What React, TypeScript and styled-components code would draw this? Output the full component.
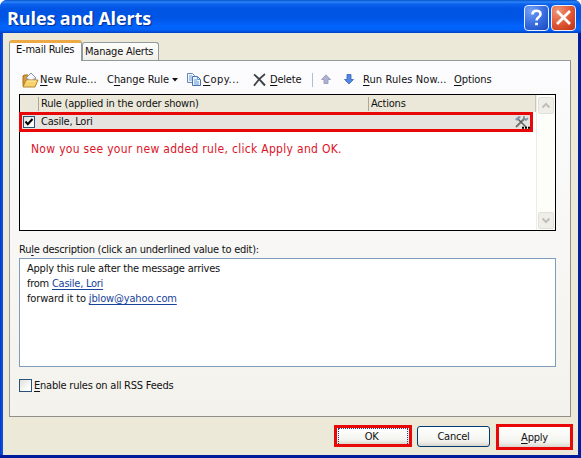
import React from 'react';
import styled, { createGlobalStyle } from 'styled-components';

const Global = createGlobalStyle`
  html, body { margin: 0; padding: 0; background: #fff; overflow: hidden; }
  * { box-sizing: border-box; }
  body { font-family: "DejaVu Sans Condensed", "DejaVu Sans", sans-serif; font-size: 11px; font-stretch: condensed; color: #111; }
`;
const Window = styled.div`
  width: 581px; height: 458px; display: flex; flex-direction: column;
  border-radius: 7px 7px 0 0; overflow: hidden;
  background: linear-gradient(90deg, #0038c8 0, #1155e4 3px, #0a3fd0 570px, #001c9c 580px);
  border-bottom: 3px solid #001c9c;
`;
const TitleBar = styled.header`
  height: 33px; flex: none; display: flex; align-items: center; padding: 2px 5px 0 7px;
  background: linear-gradient(#0751cc 0, #2a86f6 2px, #0c62ee 4px, #0054e3 9px, #0055e5 18px, #0264fd 26px, #0261f8 30px, #003fc4 33px);
`;
const Title = styled.h1`
  flex: 1; margin: 0; font: bold 18px/28px "Open Sans", "Noto Sans", sans-serif; font-stretch: normal;
  color: #fff; letter-spacing: -0.1px; text-shadow: 1px 1px 1px #0a2a90;
`;
const CaptionButton = styled.button<{ $close?: boolean }>`
  width: 25px; height: 26px; padding: 0; margin-left: 2px; border: 1px solid #e8efff; border-radius: 4px;
  background: ${p => p.$close
    ? 'radial-gradient(circle at 25% 20%, #ef9779, #e15a37 50%, #bd3010)'
    : 'radial-gradient(circle at 25% 20%, #729ff5, #3a6fe0 50%, #1648bd)'};
  svg { display: block; margin: auto; }
`;
const Body = styled.main`
  flex: 1; margin: 0 3px 0 3px; padding: 7px 5px 0 6px; background: #ece9d8;
`;
const Tabs = styled.div`display: flex; align-items: flex-end; height: 20px;`;
const Tab = styled.div<{ $active?: boolean }>`
  position: relative; z-index: ${p => p.$active ? 1 : 0};
  width: ${p => p.$active ? 73 : 77}px; height: ${p => p.$active ? 21 : 18}px;
  margin-bottom: ${p => p.$active ? -1 : 0}px;
  padding-left: ${p => p.$active ? 6 : 2}px;
  line-height: ${p => p.$active ? 14 : 18}px;
  border: 1px solid #919b9c; border-bottom: 0; border-radius: 3px 3px 0 0;
  border-top: ${p => p.$active ? '3px solid #eda945' : '1px solid #919b9c'};
  background: ${p => p.$active ? '#fcfcfe' : 'linear-gradient(#fdfdfb, #f1f0e8)'};
`;
const Panel = styled.section`
  width: 562px; height: 357px; border: 1px solid #919b9c; border-right-color: #8e8f8a; border-bottom-color: #8e8f8a;
  background: linear-gradient(#fcfcfe, #f3f2ec); padding: 7px 13px 0 9px;
`;
const Toolbar = styled.div`height: 26px; display: flex; align-items: center; padding: 0 0 3px 3px;`;
const Tool = styled.div<{ $w: number; $gap?: number }>`
  width: ${p => p.$w}px; height: 20px; display: flex; align-items: center; white-space: nowrap; flex: none;
  gap: ${p => p.$gap ?? 1}px;
  svg { flex: none; }
`;
const Label = styled.span<{ $ls?: number }>`
  white-space: nowrap; letter-spacing: ${p => p.$ls ?? -0.22}px;
  u { text-underline-offset: 2px; }
`;
const List = styled.div`
  height: 137px; width: 537px; border: 1px solid #000; display: flex; background: #fff;
`;
const Rows = styled.div`width: 516px; flex: none;`;
const HeaderRow = styled.div`
  height: 17px; display: flex; align-items: center; background: #ebe8d9; border-right: 1px solid #c9c6b8;
`;
const HeaderCell = styled.div<{ $w: number }>`
  width: ${p => p.$w}px; height: 14px; line-height: 14px; padding-left: 2px; border-right: 1px solid #aaa89b;
  &:last-child { border: 0; }
`;
const RuleRow = styled.div`
  height: 20px; width: 514px; margin-left: -1px; border: 3px solid #e80808; display: flex; align-items: center;
  background: #e5e4df; padding: 0 0 1px 1px;
`;
const RuleName = styled(Label)`flex: 1; padding-left: 6px;`;
const CheckBox = styled.span<{ $size: number }>`
  width: ${p => p.$size}px; height: ${p => p.$size}px; flex: none; border: 1px solid #29527d;
  background: linear-gradient(135deg, #dfdfda, #fff 80%);
  svg { display: block; }
`;
const Note = styled.p`
  margin: 9px 0 0 11px; font-size: 12px; line-height: 16px; color: #db1428; white-space: nowrap; letter-spacing: 0.3px;
`;
const ScrollTrack = styled.div`
  flex: 1; border-left: 1px solid #eeede5; background: #fdfdfa; display: flex; flex-direction: column;
  justify-content: space-between; padding: 2px 1px 1px;
`;
const ScrollButton = styled.div`
  width: 16px; height: 17px; border: 1px solid #e2e1d9; border-radius: 2px; background: #efeee8;
  display: grid; place-items: center;
`;
const DescriptionLabel = styled.div`height: 27px; padding-top: 11px; line-height: 15px;`;
const Description = styled.div`
  width: 537px; height: 109px; border: 1px solid #7f9db9; background: #fff; padding: 2px 7px; line-height: 15px;
`;
const Link = styled.a`color: #17439a; text-decoration: underline; text-underline-offset: 2px;`;
const FeedOption = styled.label`display: flex; align-items: center; gap: 2px; margin-top: 12px; height: 13px;`;
const Actions = styled.footer`
  display: flex; justify-content: flex-end; align-items: flex-start; height: 26px; margin-top: 7px;
`;
const Button = styled.button<{ $kind: 'ok' | 'cancel' | 'apply' }>`
  font: inherit; color: #111; padding: 0;
  width: ${p => ({ ok: 78, cancel: 73, apply: 77 })[p.$kind]}px;
  height: ${p => ({ ok: 22, cancel: 21, apply: 26 })[p.$kind]}px;
  margin-left: ${p => ({ ok: 0, cancel: 5, apply: 6 })[p.$kind]}px;
  margin-top: ${p => ({ ok: 1, cancel: 2, apply: 0 })[p.$kind]}px;
  border: ${p => p.$kind === 'cancel' ? '1px solid #003c74' : '3px solid #e80808'};
  border-radius: ${p => p.$kind === 'cancel' ? 3 : 0}px;
  background: linear-gradient(#fff, #f3f3ee 75%, #d9d6cd);
  display: grid; place-items: center;
`;
const Focus = styled.span`
  width: 70px; height: 16px; line-height: 15px; border: 1px dotted #333578; border-bottom: 0; text-align: center;
  letter-spacing: -0.3px; padding-right: 3px;
`;

const HelpIcon = () => (
  <svg width="19" height="21" viewBox="0 0 19 21" fill="none" stroke="#fff">
    <path d="M5.5 7.5c0-2.4 1.5-3.8 4-3.8s4 1.4 4 3.5c0 3.2-4 3-4 6.4" strokeWidth="2.6" />
    <path d="M9.5 15.7v2.6" strokeWidth="2.8" />
  </svg>
);
const CloseIcon = () => (
  <svg width="19" height="21" viewBox="0 0 19 21"><path d="M4 5l11 11M15 5L4 16" stroke="#fff" strokeWidth="2.7" strokeLinecap="square" /></svg>
);
const FolderIcon = () => (
  <svg width="17" height="16" viewBox="0 0 17 16">
    <path d="M1 4l1-1h4l1 2h6v9H1z" fill="#d79b31" stroke="#a87121" />
    <path d="M4 6l5-5 5 5-4 5z" fill="#f5f7fb" stroke="#8995ad" />
    <path d="M5 6l4 3 4-3" fill="none" stroke="#a7b4c8" />
    <path d="M4 8h12l-3 7H1z" fill="#f8d36c" stroke="#b78531" />
    <path d="M5 9h9" stroke="#fff0ac" />
  </svg>
);
const CopyIcon = () => (
  <svg width="16" height="15" viewBox="0 0 16 15">
    <path d="M1.5 1.5h5l2 2v7h-7z" fill="#eef6ff" stroke="#6684b8" />
    <path d="M3 4h3M3 6h4M3 8h4" stroke="#75a3cf" />
    <path d="M6.5 4.5h5l3 3v6h-8z" fill="#eef6ff" stroke="#4c70ad" />
    <path d="M11.5 4.5v3h3M8 8h3M8 10h5M8 12h5" fill="none" stroke="#609aca" />
  </svg>
);
const DeleteIcon = () => (
  <svg width="13" height="14" viewBox="0 0 13 14">
    <path d="M1 1.5c3 2 7 6.5 11 11" fill="none" stroke="#3e4247" strokeWidth="2" />
    <path d="M12 1C8 4 4 8 1 12.8" fill="none" stroke="#3e4247" strokeWidth="1.7" />
  </svg>
);
const ArrowIcon = ({ down = false }: { down?: boolean }) => (
  <svg width="10" height="11" viewBox="0 0 10 11">
    {down
      ? <path d="M3 .5h4v5h2.5L5 10 .5 5.5H3z" fill="#5288e5" stroke="#3762b5" strokeWidth=".8" />
      : <path d="M5 .8l4.5 4.7H7v4H3v-4H.5z" fill="#adb3cf" stroke="#9096b5" strokeWidth=".8" />}
  </svg>
);
const Chevron = ({ down = false }: { down?: boolean }) => (
  <svg width="10" height="7" viewBox="0 0 10 7"><path d={down ? 'M1.5 1.5L5 5l3.5-3.5' : 'M1.5 5.5L5 2l3.5 3.5'} fill="none" stroke="#c0c0b9" strokeWidth="2" /></svg>
);
const ToolsIcon = () => (
  <svg width="16" height="14" viewBox="0 0 16 14" fill="none">
    <path d="M2 12L11 3" stroke="#77766d" strokeWidth="2" />
    <path d="M10 1v3l2 1 2-2" stroke="#7890a3" strokeWidth="1.5" />
    <path d="M4 4l8 8" stroke="#565d62" strokeWidth="1.5" />
    <path d="M1 4l4-3 2 1-4 4z" fill="#8299ad" />
    <path d="M8 12.8h2M11 12.8h2M14 12.8h2" stroke="#000" strokeWidth="2" />
  </svg>
);

export default function App() {
  return (
    <>
      <Global />
      <Window>
        <TitleBar>
          <Title>Rules and Alerts</Title>
          <CaptionButton aria-label="Help"><HelpIcon /></CaptionButton>
          <CaptionButton $close aria-label="Close"><CloseIcon /></CaptionButton>
        </TitleBar>
        <Body>
          <Tabs>
            <Tab $active><Label>E-mail Rules</Label></Tab>
            <Tab><Label>Manage Alerts</Label></Tab>
          </Tabs>
          <Panel>
            <Toolbar>
              <Tool $w={85}><FolderIcon /><Label $ls={0.1}><u>N</u>ew Rule...</Label></Tool>
              <Tool $w={79} $gap={3}>
                <Label $ls={-0.05}>C<u>h</u>ange Rule</Label>
                <svg width="6" height="4" viewBox="0 0 6 4"><path d="M0 0h6L3 3.5z" fill="#111" /></svg>
              </Tool>
              <Tool $w={67}><CopyIcon /><Label $ls={0.5}><u>C</u>opy...</Label></Tool>
              <Tool $w={59} $gap={4}><DeleteIcon /><Label $ls={-0.2}><u>D</u>elete</Label></Tool>
              <Tool $w={9}><svg width="1" height="14"><path d="M.5 0v14" stroke="#a4c4d7" /></svg></Tool>
              <Tool $w={23}><ArrowIcon /></Tool>
              <Tool $w={19}><ArrowIcon down /></Tool>
              <Tool $w={91}><Label $ls={0.1}><u>R</u>un Rules Now...</Label></Tool>
              <Tool $w={50}><Label $ls={-0.1}><u>O</u>ptions</Label></Tool>
            </Toolbar>
            <List>
              <Rows>
                <HeaderRow>
                  <HeaderCell $w={19} />
                  <HeaderCell $w={330}><Label>Rule (applied in the order shown)</Label></HeaderCell>
                  <HeaderCell $w={160}><Label>Actions</Label></HeaderCell>
                </HeaderRow>
                <RuleRow>
                  <CheckBox $size={12}>
                    <svg width="10" height="10" viewBox="0 0 10 10"><path d="M1.5 4.5l2.3 2.7L8.5 2" fill="none" stroke="#000" strokeWidth="2" /></svg>
                  </CheckBox>
                  <RuleName>Casile, Lori</RuleName>
                  <ToolsIcon />
                </RuleRow>
                <Note>Now you see your new added rule, click Apply and OK.</Note>
              </Rows>
              <ScrollTrack>
                <ScrollButton><Chevron /></ScrollButton>
                <ScrollButton><Chevron down /></ScrollButton>
              </ScrollTrack>
            </List>
            <DescriptionLabel><Label $ls={-0.25}>Ru<u>l</u>e description (click an underlined value to edit):</Label></DescriptionLabel>
            <Description>
              <div><Label>Apply this rule after the message arrives</Label></div>
              <div><Label $ls={-0.25}>from <Link>Casile, Lori</Link></Label></div>
              <div><Label $ls={-0.15}>forward it to <Link>jblow@yahoo.com</Link></Label></div>
            </Description>
            <FeedOption><CheckBox $size={13} /><Label><u>E</u>nable rules on all RSS Feeds</Label></FeedOption>
          </Panel>
          <Actions>
            <Button $kind="ok"><Focus>OK</Focus></Button>
            <Button $kind="cancel"><Label>Cancel</Label></Button>
            <Button $kind="apply"><Label>
              <u>A</u>pply</Label></Button>
          </Actions>
        </Body>
      </Window>
    </>
  );
}
